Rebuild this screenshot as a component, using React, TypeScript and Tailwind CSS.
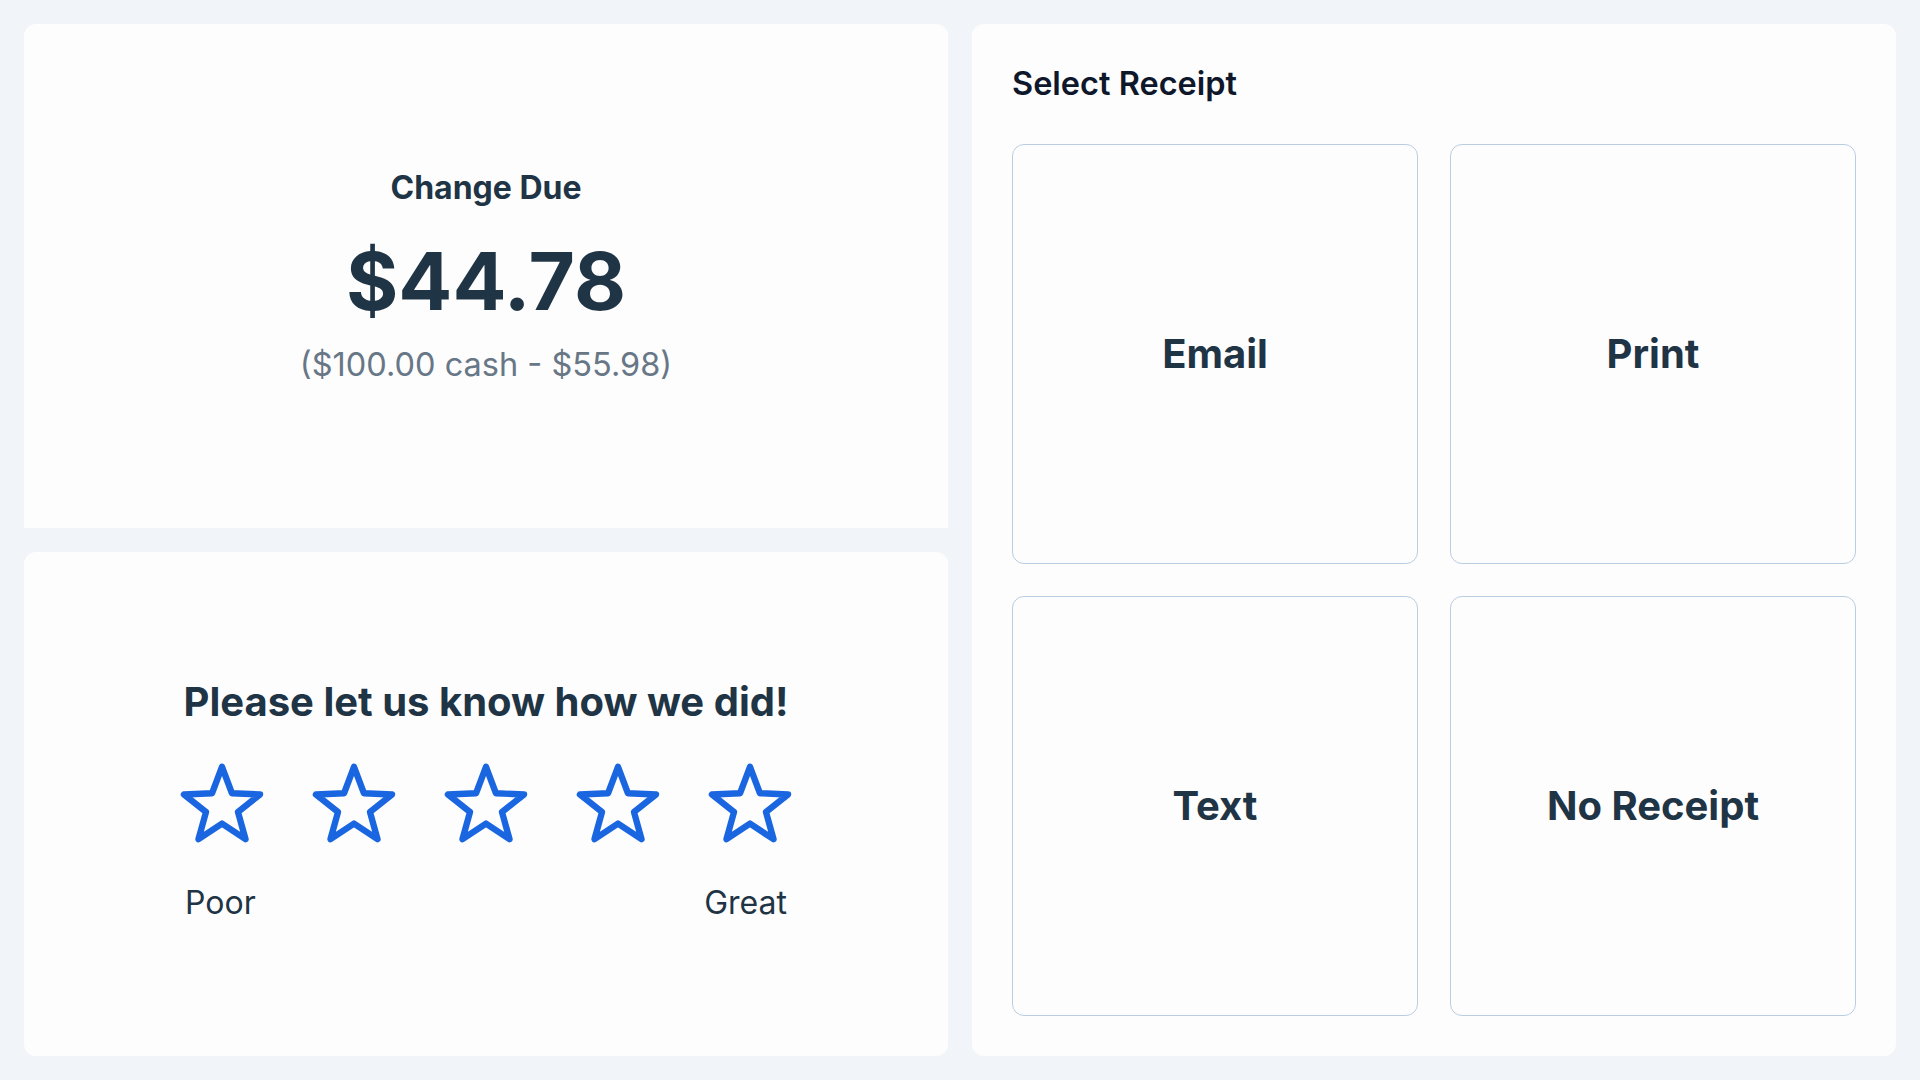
import { useState } from 'react'

const receiptOptions = ['Email', 'Print', 'Text', 'No Receipt']

function StarIcon() {
  return (
    <svg viewBox="0 0 24 24" className="h-24 w-24" fill="none" stroke="#1a66e0" strokeWidth={1.6} strokeLinejoin="round">
      <polygon points="12,2.955 14.47,9.557 21.511,9.865 15.994,14.253 17.878,21.045 12,17.155 6.122,21.045 8.006,14.253 2.489,9.865 9.53,9.557" />
    </svg>
  )
}

export default function App() {
  const [receipt, setReceipt] = useState<string | null>(null)

  return (
    <div className="grid h-screen w-full grid-cols-2 gap-6 bg-[#f1f5f9] p-6 font-['Inter',sans-serif] text-[#1f3445]">
      <div className="grid min-w-0 grid-rows-2 gap-6">
        <div className="flex flex-col items-center justify-center rounded-t-xl bg-[#fdfdfe]">
          <p className="text-[32px] leading-10 font-bold">Change Due</p>
          <p className="mt-[33px] text-[80px] leading-none font-bold">$44.78</p>
          <p className="mt-6 text-[32.5px] leading-10 text-[#687786]">($100.00 cash - $55.98)</p>
        </div>
        <div className="flex flex-col items-center justify-center rounded-xl bg-[#fdfdfe] pb-[8px]">
          <p className="text-[40px] leading-[48px] font-bold">Please let us know how we did!</p>
          <div className="mt-[29px] flex flex-col">
            <div className="flex gap-9">
              {Array.from({ length: 5 }).map((_, i) => (
                <button key={i} className="cursor-pointer">
                  <StarIcon />
                </button>
              ))}
            </div>
            <div className="mt-8 flex justify-between px-[11px] text-[32px] leading-10">
              <span>Poor</span>
              <span>Great</span>
            </div>
          </div>
        </div>
      </div>

      <div className="flex min-w-0 flex-col rounded-xl bg-[#fdfdfe] p-10">
        <h2 className="text-[32.5px] leading-10 font-semibold text-[#0f172a]">Select Receipt</h2>
        <div className="mt-10 grid flex-1 grid-cols-2 grid-rows-2 gap-8">
          {receiptOptions.map((opt) => (
            <button
              key={opt}
              onClick={() => setReceipt(opt)}
              className={`flex items-center justify-center rounded-xl border bg-[#fdfdfe] text-[40px] font-bold ${
                receipt === opt ? 'border-[#1a66e0]' : 'border-[#b9cde0]'
              }`}
            >
              {opt}
            </button>
          ))}
        </div>
      </div>
    </div>
  )
}
